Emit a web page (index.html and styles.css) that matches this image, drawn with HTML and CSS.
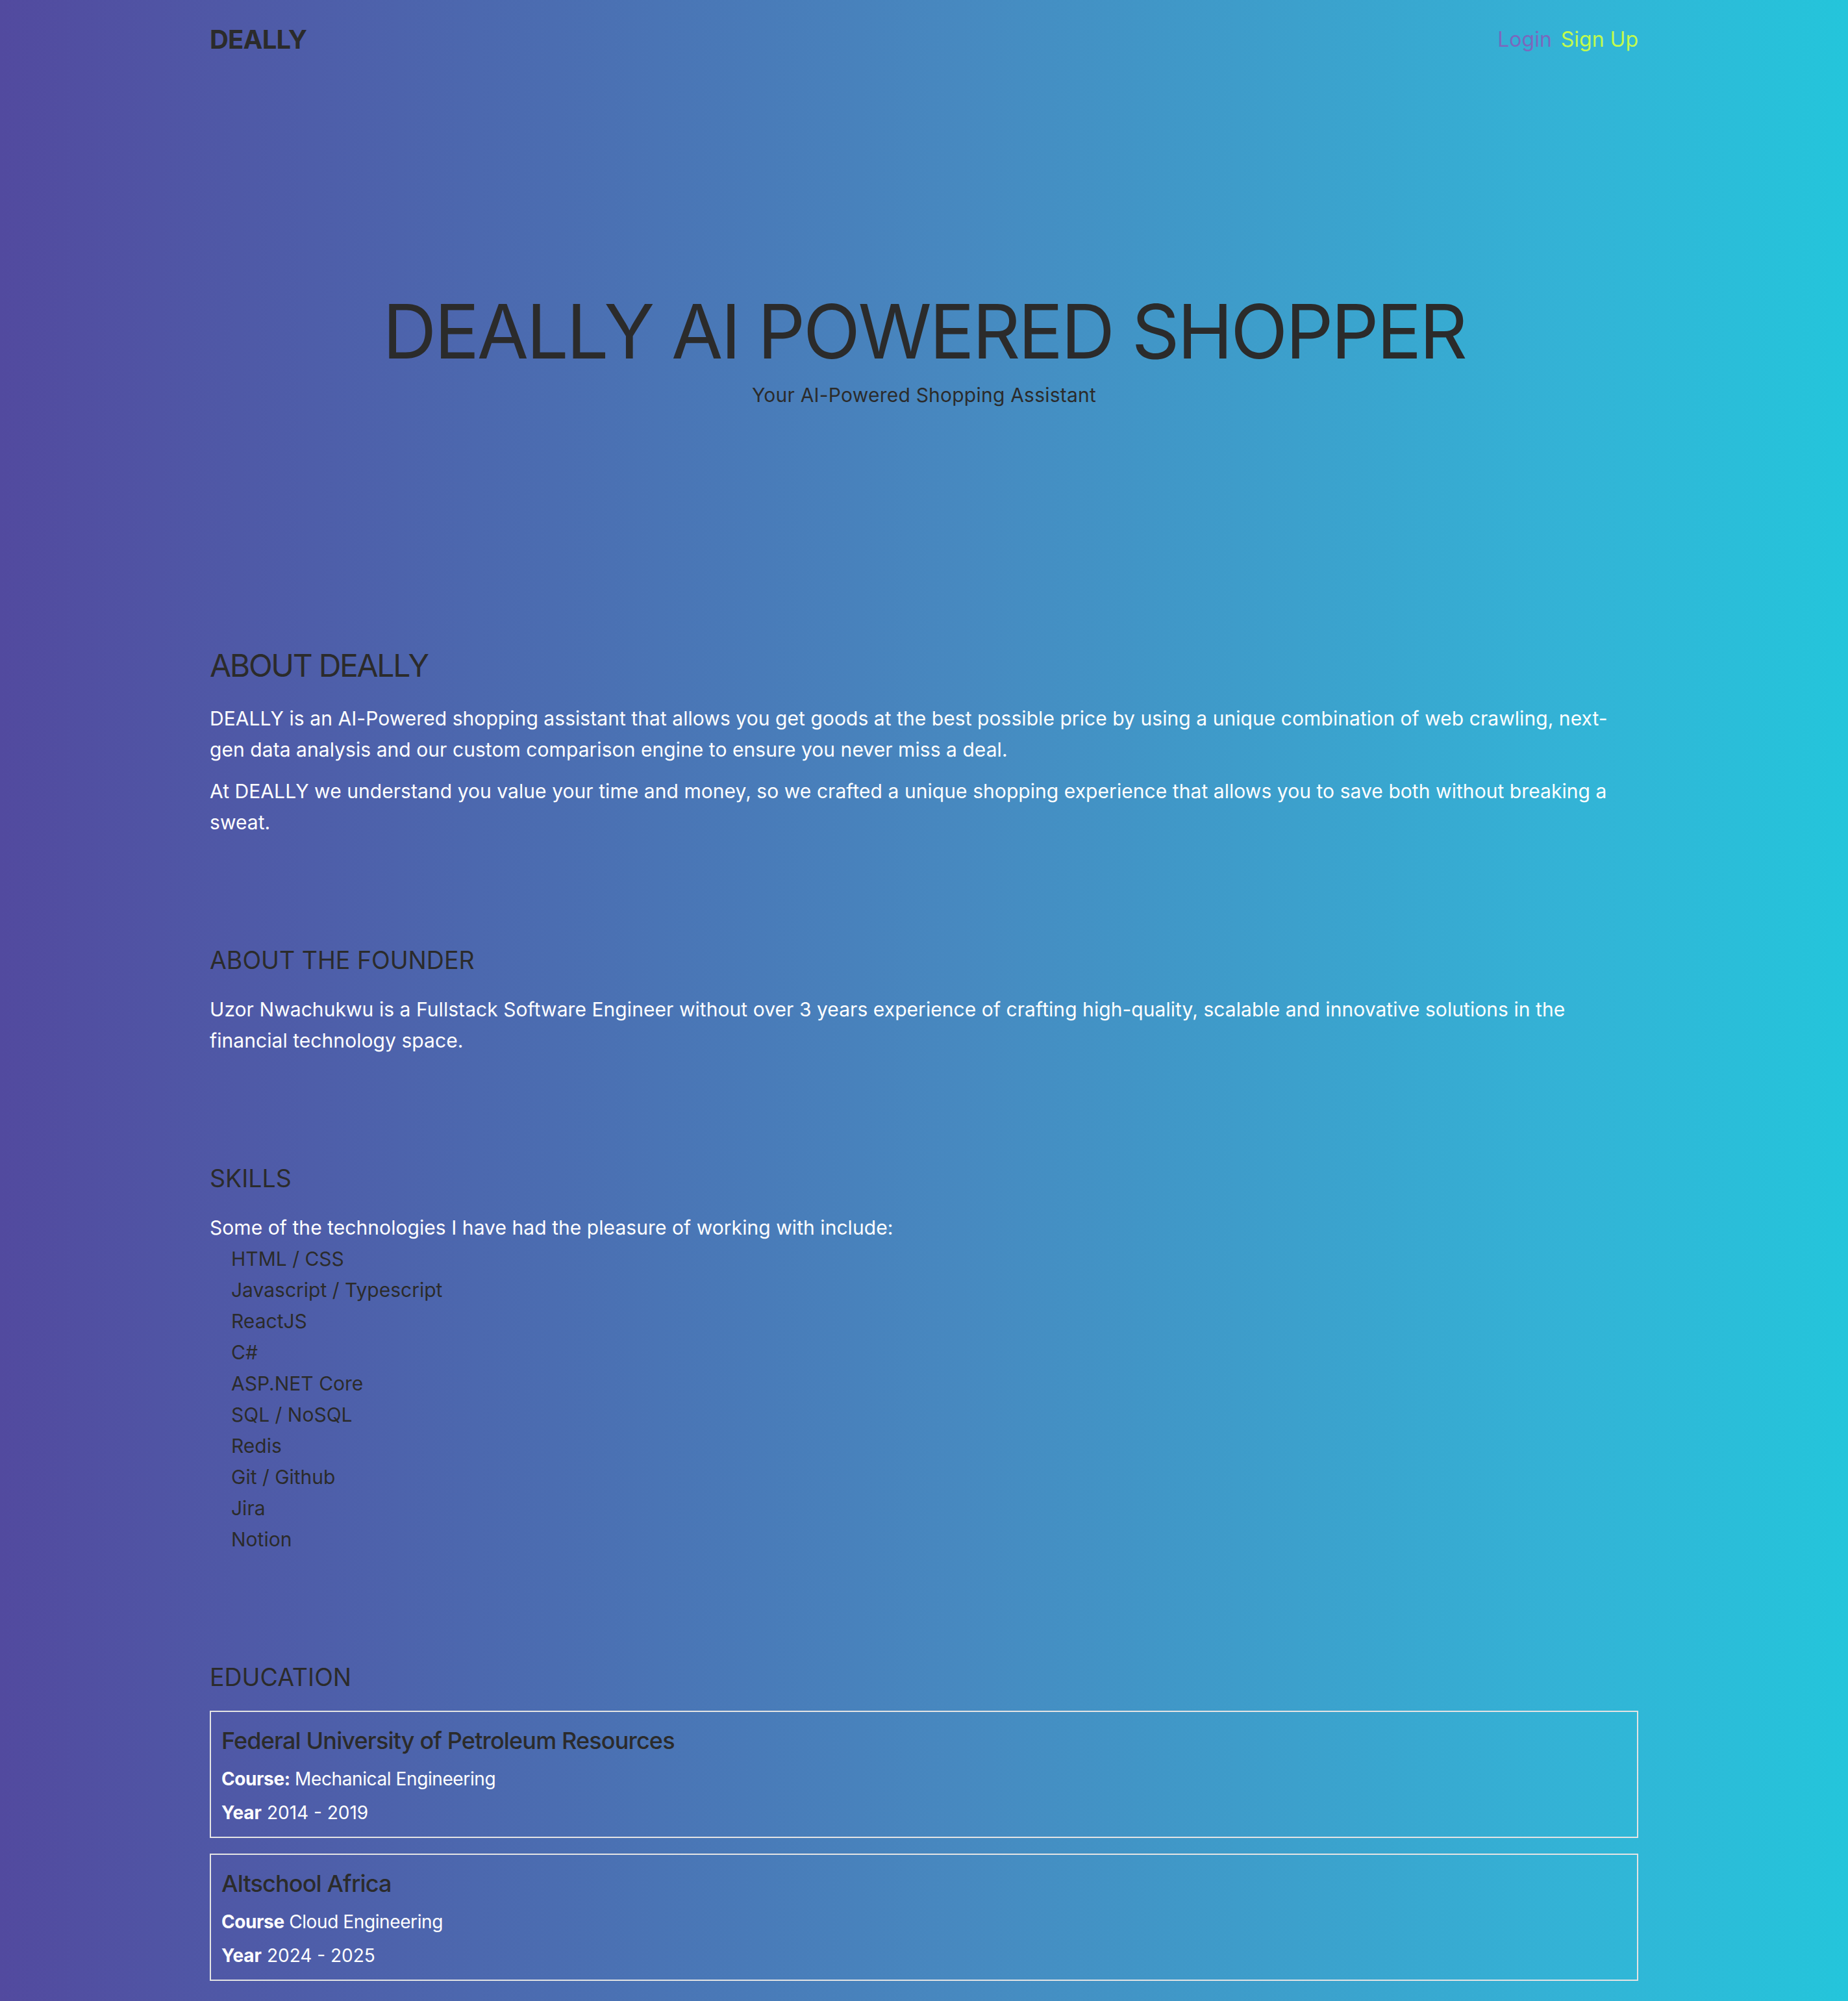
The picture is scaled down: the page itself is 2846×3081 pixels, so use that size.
FILE: index.html
```html
<!DOCTYPE html>
<html lang="en">
<head>
<meta charset="utf-8">
<title>DEALLY</title>
<link rel="stylesheet" href="styles.css">
</head>
<body>
<div class="page">
  <header class="nav container">
    <div class="brand">DEALLY</div>
    <nav class="nav-links">
      <a class="login" href="#">Login</a>
      <a class="signup" href="#">Sign Up</a>
    </nav>
  </header>

  <section class="hero container">
    <h1 class="hero-title">DEALLY AI POWERED SHOPPER</h1>
    <p class="hero-sub">Your AI-Powered Shopping Assistant</p>
  </section>

  <main class="container">
    <section class="section section-first">
      <h2 class="h2">ABOUT DEALLY</h2>
      <p class="text">DEALLY is an AI-Powered shopping assistant that allows you get goods at the best possible price by using a unique combination of web crawling, next-gen data analysis and our custom comparison engine to ensure you never miss a deal.</p>
      <p class="text text-next">At DEALLY we understand you value your time and money, so we crafted a unique shopping experience that allows you to save both without breaking a sweat.</p>
    </section>

    <section class="section">
      <h3 class="h3">ABOUT THE FOUNDER</h3>
      <p class="text">Uzor Nwachukwu is a Fullstack Software Engineer without over 3 years experience of crafting high-quality, scalable and innovative solutions in the financial technology space.</p>
    </section>

    <section class="section">
      <h3 class="h3">SKILLS</h3>
      <p class="text">Some of the technologies I have had the pleasure of working with include:</p>
      <ul class="skills">
        <li>HTML / CSS</li>
        <li>Javascript / Typescript</li>
        <li>ReactJS</li>
        <li>C#</li>
        <li>ASP.NET Core</li>
        <li>SQL / NoSQL</li>
        <li>Redis</li>
        <li>Git / Github</li>
        <li>Jira</li>
        <li>Notion</li>
      </ul>
    </section>

    <section class="section">
      <h3 class="h3">EDUCATION</h3>
      <div class="cards">
        <div class="card">
          <h4 class="card-title">Federal University of Petroleum Resources</h4>
          <p class="card-line card-course"><strong>Course:</strong> Mechanical Engineering</p>
          <p class="card-line card-year"><strong>Year</strong> 2014 - 2019</p>
        </div>
        <div class="card">
          <h4 class="card-title">Altschool Africa</h4>
          <p class="card-line card-course"><strong>Course</strong> Cloud Engineering</p>
          <p class="card-line card-year"><strong>Year</strong> 2024 - 2025</p>
        </div>
      </div>
    </section>
  </main>
</div>
</body>
</html>
```

FILE: styles.css
```css
* { box-sizing: border-box; }

html, body {
  margin: 0;
  padding: 0;
}

body {
  font-family: Inter, "Noto Sans", "Liberation Sans", sans-serif;
  color: #2b2b2b;
  background: linear-gradient(90deg, #524a9f 0%, #4b6db1 30%, #4789c0 52%, #33b3d6 85%, #24c5db 100%);
  min-height: 3081px;
}

.page {
  padding-bottom: 32px;
}

.container {
  width: 2200px;
  margin: 0 auto;
}

.nav {
  height: 120px;
  display: flex;
  align-items: center;
  justify-content: space-between;
}

.brand {
  font-size: 40px;
  font-weight: 700;
  letter-spacing: -0.8px;
  color: #2b2b2b;
}

.nav-links {
  display: flex;
  gap: 14px;
  font-size: 32px;
}

.nav-links a {
  text-decoration: none;
}

.login { color: #7b68bd; }
.signup { color: #c2fb4d; }

.hero {
  padding-top: 322px;
  text-align: center;
}

.hero-title {
  margin: 0;
  font-size: 115px;
  font-weight: 400;
  line-height: 1.2;
  letter-spacing: -3.3px;
  color: #2b2b2b;
}

.hero-sub {
  margin: 6px 0 0;
  font-size: 30px;
  line-height: 45px;
  letter-spacing: 0.22px;
  color: #2b2b2b;
}

.section {
  margin-top: 166px;
}

.section-first {
  margin-top: 365px;
}

.h2 {
  margin: 0 0 28px;
  font-size: 48px;
  font-weight: 400;
  line-height: 1.2;
  letter-spacing: -2.3px;
}

.h3 {
  margin: 0 0 29px;
  font-size: 37.5px;
  font-weight: 400;
  line-height: 1.2;
}

.text {
  margin: 0;
  font-size: 30px;
  line-height: 48px;
  letter-spacing: 0.06px;
  color: #ffffff;
}

.text-next {
  margin-top: 16px;
}

.skills {
  list-style: none;
  margin: 0;
  padding: 0 0 0 33px;
  font-size: 30px;
  line-height: 48px;
  color: #2b2b2b;
}

.cards {
  display: flex;
  flex-direction: column;
  gap: 24px;
}

.card {
  border: 2px solid #e4e4e4;
  padding: 16px;
}

.card-title {
  margin: 7px 0 0;
  font-size: 36px;
  font-weight: 500;
  line-height: 1.2;
  letter-spacing: -0.85px;
  color: #2b2b2b;
}

.card-line {
  margin: 0;
  font-size: 28px;
  line-height: 42px;
  color: #ffffff;
}

.card-line strong {
  font-weight: 700;
}

.card-course {
  margin-top: 16px;
  letter-spacing: -0.4px;
}

.card-year {
  margin-top: 10px;
}
```
